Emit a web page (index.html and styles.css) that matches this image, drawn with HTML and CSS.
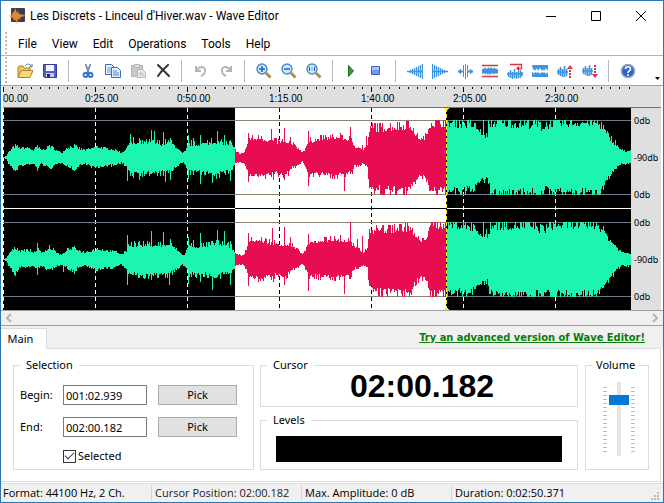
FILE: index.html
```html
<!DOCTYPE html>
<html lang="en">
<head>
<meta charset="utf-8">
<title>Les Discrets - Linceul d'Hiver.wav - Wave Editor</title>
<link rel="stylesheet" href="styles.css">
</head>
<body>
<div class="window">
  <header class="titlebar">
    <svg class="app-icon" viewBox="0 0 16 16"><rect x="2" y="0" width="14" height="14" rx="1" fill="#3d3f47"/><path d="M2 7h14" stroke="#6d6f78"/><path d="M0 8l3-1 1-4 1 2 1-5 2 5 1-2 1 3 4 1 2 1-4 1-2 3-1-2-1 6-2-5-1 2-1-3z" fill="#e8862e"/></svg>
    <h1 class="title">Les Discrets - Linceul d'Hiver.wav - Wave Editor</h1>
    <div class="window-controls">
      <button aria-label="Minimize"><svg viewBox="0 0 10 10"><path d="M0 5.500h10"/></svg></button>
      <button aria-label="Maximize"><svg viewBox="0 0 10 10"><path d="M.5.5h9v9h-9z"/></svg></button>
      <button aria-label="Close"><svg viewBox="0 0 10 10"><path d="M0 0l10 10M10 0L0 10"/></svg></button>
    </div>
  </header>

  <nav class="menubar grip">
    <button>File</button><button>View</button><button>Edit</button><button>Operations</button><button>Tools</button><button>Help</button>
  </nav>

  <div class="toolbar grip" role="toolbar" aria-label="Main tools">
    <button aria-label="Open"><svg viewBox="0 0 16 16"><path d="M1 14V4l1-1h4l1 2h6v3" fill="#f0c65a" stroke="#a9822c"/><path d="M1 14.500L4 7.500h12l-3 7z" fill="#fbd874" stroke="#a9822c"/><path d="M8 3c2-3 5-2 6 0m1-2v3h-3" fill="none" stroke="#4e7199"/></svg></button>
    <button aria-label="Save"><svg viewBox="0 0 16 16"><path d="M1.500 1.500h13v13h-12l-1-1z" fill="#5a5fc8" stroke="#34399a"/><path d="M4 2h8v6H4z" fill="#f4f6ff"/><path d="M4 10h8v4H4z" fill="#c3c8e4"/><path d="M5 11h3v3H5z" fill="#242a72"/></svg></button>
    <span class="sep"></span>
    <button aria-label="Cut"><svg viewBox="0 0 16 16" fill="none"><path d="M5.500 1l3.500 9M10.500 1L7 10" stroke="#6681a8" stroke-width="1.600"/><circle cx="5.500" cy="12" r="2" stroke="#2e6bd0" stroke-width="1.800"/><circle cx="10.500" cy="12" r="2" stroke="#2e6bd0" stroke-width="1.800"/></svg></button>
    <button aria-label="Copy"><svg viewBox="0 0 16 16" stroke="#3a6cb8"><path d="M.5 1.500h6l3 3v7h-9z" fill="#e4f0ff"/><path d="M2 5h5M2 7h4M2 9h4" stroke="#6b9ee0"/><path d="M6.500 4.500h6l3 3v7h-9z" fill="#e4f0ff"/><path d="M8 8h4M8 10h6M8 12h6" stroke="#4b86d6"/></svg></button>
    <button aria-label="Paste" disabled><svg viewBox="0 0 16 16" stroke="#b4b4b4"><path d="M1.500 2.500h11v11h-11z" fill="#c9c9c9"/><path d="M4.500 1.500h5v3h-5z" fill="#e2e2e2"/><path d="M7.500 6.500h5l3 3v5h-8z" fill="#ececec"/><path d="M9 10h4M9 12h5"/></svg></button>
    <button aria-label="Delete"><svg viewBox="0 0 16 16"><path d="M3 2q5 5 11 11M13 2Q7 7 3 13" fill="none" stroke="#333" stroke-width="2" stroke-linecap="round"/></svg></button>
    <span class="sep"></span>
    <button aria-label="Undo" disabled><svg viewBox="0 0 16 16"><path d="M3 3v5h5M3.500 7.500C7 2 13 4 12 8c0 2-2 4-4 5" fill="none" stroke="#b5b5b5" stroke-width="2"/></svg></button>
    <button aria-label="Redo" disabled><svg viewBox="0 0 16 16"><path d="M13 3v5H8M12.500 7.500C9 2 3 4 4 8c0 2 2 4 4 5" fill="none" stroke="#b5b5b5" stroke-width="2"/></svg></button>
    <span class="sep"></span>
    <button aria-label="Zoom in"><svg viewBox="0 0 16 16"><path d="M10 10l4.500 4.500" stroke="#b98a4c" stroke-width="3"/><circle cx="6" cy="6" r="5" fill="#cdeaff" stroke="#4a86c8" stroke-width="1.400"/><path d="M3 6h6M6 3v6" stroke="#1b5fb5" stroke-width="1.500"/></svg></button>
    <button aria-label="Zoom out"><svg viewBox="0 0 16 16"><path d="M10 10l4.500 4.500" stroke="#b98a4c" stroke-width="3"/><circle cx="6" cy="6" r="5" fill="#cdeaff" stroke="#4a86c8" stroke-width="1.400"/><path d="M3 6h6" stroke="#1b5fb5" stroke-width="1.500"/></svg></button>
    <button aria-label="Actual size"><svg viewBox="0 0 16 16"><path d="M10 10l4.500 4.500" stroke="#b98a4c" stroke-width="3"/><circle cx="6" cy="6" r="5" fill="#cdeaff" stroke="#4a86c8" stroke-width="1.400"/><path d="M3.500 4v4M8.500 4v4M6 4.500v1M6 6.500v1" stroke="#1b5fb5"/></svg></button>
    <span class="sep"></span>
    <button aria-label="Play"><svg viewBox="0 0 16 16"><path d="M4.500 2.500v11l5-5.500z" fill="#35a02c" stroke="#1d6b1b"/></svg></button>
    <button aria-label="Stop"><svg viewBox="0 0 16 16"><path d="M2.500 3.500h8v8h-8z" fill="#6f98e6" stroke="#4263b0"/><path d="M3 4h7v3H3z" fill="#a8c4f6"/></svg></button>
    <span class="sep"></span>
    <button aria-label="Fade in"><svg viewBox="0 0 16 16" stroke="#3d94e0" stroke-width="1.300"><path d="M0 8.500h16M3.500 7v3M5.500 6v5M7.500 5v7M9.500 4v9M11.500 3v11M13.500 2v13M15.500 1v15"/></svg></button>
    <button aria-label="Fade out"><svg viewBox="0 0 16 16" stroke="#3d94e0" stroke-width="1.300"><path d="M0 8.500h16M12.500 7v3M10.500 6v5M8.500 5v7M6.500 4v9M4.500 3v11M2.500 2v13M.5 1v15"/></svg></button>
    <button aria-label="Insert silence"><svg viewBox="0 0 16 16"><path d="M6.500 2v12M8.500 1v15M10.500 2v12" stroke="#3d94e0"/><path d="M1 8.500h5M11 8.500h5" stroke="#3d94e0" stroke-width="2"/><path d="M1 8.500l3-3v6zM16 8.500l-3-3v6z" fill="#3d94e0"/></svg></button>
    <button aria-label="Normalize"><svg viewBox="0 0 16 16"><path d="M0 2.500h16M0 13.500h16" stroke="#d23a40" stroke-width="1.300"/><path d="M0 7l1-2 1 1 1-2 1 2 2-1 1-1 1 2 1-2 2 2 1-2 1 2 1-1 2 2v3l-2 1-1-1-1 2-1-2-2 1-1 1-1-2-1 2-2-2-1 2-1-2-2 1-1-1z" fill="#3d94e0"/></svg></button>
    <button aria-label="Reverse"><svg viewBox="0 0 16 16"><path d="M3 1.500h11.500v4H10m2-2l-2 2 2 2" fill="none" stroke="#d23a40" stroke-width="1.300"/><path d="M0 11h16M1.500 9v5M3.500 7v8M5.500 9v7M7.500 6v9M9.500 9v7M11.500 8v7M13.500 7v8M15 9v4" stroke="#3d94e0" stroke-width="1.500"/></svg></button>
    <button aria-label="Invert"><svg viewBox="0 0 16 16"><path d="M0 2h16v4l-1 2-1-3-2 3-1-2-1 2-2-3-2 3-1-3-2 3-1-2-1 1zM0 14h16v-3l-1-2-1 2-2-2-1 1-2-1-1 2-2-2-1 1-2-1-1 2-1-2-1 1z" fill="#3d94e0"/></svg></button>
    <button aria-label="Raise volume"><svg viewBox="0 0 16 16"><path d="M0 9h11M1.500 6v6M3.500 4v9M5.500 6v8M7.500 3v11M9.500 6v7" stroke="#3d94e0" stroke-width="1.600"/><path d="M13 15V6" stroke="#d23a40" stroke-width="2" stroke-dasharray="2 1"/><path d="M13 2l3 4h-6z" fill="#d23a40"/></svg></button>
    <button aria-label="Lower volume"><svg viewBox="0 0 16 16"><path d="M0 8h11M1.500 5v6M3.500 3v9M5.500 5v8M7.500 2v11M9.500 5v7" stroke="#3d94e0" stroke-width="1.600"/><path d="M13 2v9" stroke="#d23a40" stroke-width="2" stroke-dasharray="2 1"/><path d="M13 15l3-4h-6z" fill="#d23a40"/></svg></button>
    <span class="sep"></span>
    <button aria-label="Help"><svg viewBox="0 0 16 16"><circle cx="8" cy="8" r="6.500" fill="#2f63cf" stroke="#8fa3c6" stroke-width="1.500"/><path d="M5.500 6c0-3 5-3 5 0 0 2-2.500 1.500-2.500 4" fill="none" stroke="#fff" stroke-width="1.600"/><circle cx="8" cy="12" r="1" fill="#fff"/></svg></button>
    <button class="overflow" aria-label="More tools"></button>
  </div>

  <main class="editor">
    <div class="ruler">
      <svg id="ticks" viewBox="0 0 628 6" preserveAspectRatio="none" aria-hidden="true"></svg>
      <div class="times"><span>00.00</span><span>0:25.00</span><span>0:50.00</span><span>1:15.00</span><span>1:40.00</span><span>2:05.00</span><span>2:30.00</span></div>
    </div>
    <div class="tracks">
      <svg id="wave" viewBox="0 0 628 202" preserveAspectRatio="none" role="img" aria-label="Stereo waveform"></svg>
      <div class="scale">
        <div class="channel"><span>0db</span><span>-90db</span><span>0db</span></div>
        <div class="channel"><span>0db</span><span>-90db</span><span>0db</span></div>
      </div>
    </div>
    <div class="scrollbar">
      <button aria-label="Scroll left"><svg viewBox="0 0 6 8"><path d="M5 0L1 4l4 4"/></svg></button>
      <button aria-label="Scroll right"><svg viewBox="0 0 6 8"><path d="M1 0l4 4-4 4"/></svg></button>
    </div>
  </main>

  <div class="tabs">
    <button class="tab">Main</button>
    <a class="promo" href="#">Try an advanced version of Wave Editor!</a>
  </div>

  <section class="panel">
    <fieldset class="selection">
      <legend>Selection</legend>
      <div class="fields">
        <label for="begin">Begin:</label><input type="text" id="begin" value="001:02.939"><button>Pick</button>
        <label for="end">End:</label><input type="text" id="end" value="002:00.182"><button>Pick</button>
        <label class="check"><input type="checkbox" checked>Selected</label>
      </div>
    </fieldset>
    <div class="middle">
      <fieldset class="cursor"><legend>Cursor</legend><output>02:00.182</output></fieldset>
      <fieldset class="levels"><legend>Levels</legend><div class="meter"></div></fieldset>
    </div>
    <fieldset class="volume">
      <legend>Volume</legend>
      <div class="slider"><span class="marks"></span><input type="range" aria-label="Volume" min="0" max="100" value="80"><span class="marks"></span></div>
    </fieldset>
  </section>

  <footer class="status">
    <span class="strong">Format: 44100 Hz, 2 Ch.</span><span>Cursor Position: 02:00.182</span><span class="strong">Max. Amplitude: 0 dB</span><span class="strong">Duration: 0:02:50.371</span>
    <svg class="resize" viewBox="0 0 8 8"><path d="M6 0h2v2H6zM3 3h2v2H3zM6 3h2v2H6zM0 6h2v2H0zM3 6h2v2H3zM6 6h2v2H6z"/></svg>
  </footer>
</div>
<script src="wave.js"></script>
</body>
</html>
```
FILE: styles.css
```css
* { box-sizing: border-box; }
body { margin: 0; background: #fff; color: #000; font: 11px/14px "Noto Sans", sans-serif; }
button, input { font: inherit; color: inherit; margin: 0; padding: 0; border: 0; background: none; }
svg { display: block; }
.window { min-height: 100vh; display: flex; flex-direction: column; border: 1px solid #2878b8; }

.titlebar { height: 30px; display: flex; align-items: center; padding-left: 8px; }
.app-icon { width: 16px; height: 16px; }
.title { flex: 1; margin: 0 0 0 5px; font: 12px/16px Roboto, sans-serif; }
.window-controls { display: flex; }
.window-controls button { width: 45px; height: 30px; display: grid; place-items: center; }
.window-controls svg { width: 10px; height: 10px; fill: none; stroke: #000; overflow: visible; }

.grip::before { content: ""; width: 2px; align-self: stretch; margin: 1px 0 1px 4px; background: repeating-linear-gradient(#bbb 0 2px, transparent 2px 4px); }
.menubar { height: 25px; display: flex; align-items: center; gap: 15px; border-bottom: 1px solid #b4b4b4; font: 12px/16px Roboto, sans-serif; }
.menubar button { padding-top: 2px; }
.menubar button:first-child { margin-left: -4px; }

.toolbar { height: 30px; display: flex; align-items: center; border-bottom: 1px solid #a0a0a0; }
.toolbar button { width: 25px; height: 25px; display: grid; place-items: center; }
.toolbar button:first-child { margin-left: 5px; }
.toolbar svg { width: 16px; height: 16px; }
.sep { width: 1px; height: 22px; margin: 0 6px; background: #b8b8b8; }
.toolbar .overflow { width: 5px; height: 3px; margin: 16px 3px 0 auto; background: #000; clip-path: polygon(0 0, 100% 0, 50% 100%); }

.editor { padding: 0 2px; }
.ruler { height: 22px; padding-right: 30px; background: #dfdfdf; border-bottom: 1px solid #707070; }
.ruler svg { width: 100%; height: 6px; }
.times { display: flex; font: 10px/14px "Liberation Sans", sans-serif; }
.times span { flex: 0 0 14.65%; text-indent: -10px; white-space: nowrap; }
.times span:first-child { text-indent: 0; }
.tracks { display: flex; height: 202px; }
#wave { flex: 1; min-width: 0; height: 202px; background: #000; }
.scale { width: 30px; background: #dfdfdf; padding-left: 3px; font-size: 9px; line-height: 12px; }
.channel { height: 102px; padding: 7px 0 9px; display: flex; flex-direction: column; justify-content: space-between; }
.scrollbar { height: 16px; margin: 0 -2px; padding: 0 5px; display: flex; justify-content: space-between; align-items: center; background: #f0f0f0; border: solid #a0a0a0; border-width: 1px 0; }
.scrollbar svg { width: 6px; height: 8px; fill: none; stroke: #b4b4b4; stroke-width: 2; }

.tabs { height: 22px; padding-top: 2px; display: flex; justify-content: space-between; align-items: flex-start; background: #f0f0f0; }
.tab { height: 21px; width: 46px; padding-right: 6px; background: #fff; border-right: 1px solid #dcdcdc; border-top: 1px solid #dcdcdc; position: relative; }
.promo { margin-right: 18px; color: #0a7c0a; font: bold 11px/20px "DejaVu Sans Condensed", "DejaVu Sans", sans-serif; }

.panel { flex: 1; display: flex; gap: 6px; padding: 9px 11px 11px 12px; margin-right: 2px; border: solid #dcdcdc; border-width: 1px 1px 1px 0; }
fieldset { margin: 0; padding: 0; border: 1px solid #dcdcdc; min-width: 0; }
legend { margin-left: 6px; padding: 0 6px; line-height: 14px; }
.selection { width: 241px; flex: none; }
.fields { display: grid; grid-template-columns: 43px 84px 79px; row-gap: 12px; align-items: center; padding: 13px 0 0 6px; }
.fields button { height: 20px; width: 79px; margin-left: 11px; background: #e1e1e1; border: 1px solid #adadad; }
.fields input[type=text] { width: 84px; height: 20px; padding: 0 2px; border: 1px solid #7a7a7a; background: #fff; }
.check { grid-column: 2 / 4; display: flex; align-items: center; gap: 2px; }
.fields .check input { appearance: none; width: 13px; height: 13px; border: 1px solid #333; display: grid; place-items: center; }
.check input:checked::before { content: ""; width: 8px; height: 4px; margin-top: -3px; border: solid #333; border-width: 0 0 1px 1px; transform: rotate(-45deg); }
.middle { flex: 1; min-width: 0; display: flex; flex-direction: column; gap: 6px; }
.cursor { height: 49px; text-align: center; }
.cursor legend, .levels legend { text-align: left; }
.cursor output { display: block; padding-left: 6px; font: bold 32px/28px "Liberation Sans", sans-serif; }
.levels { flex: 1; }
.meter { height: 26px; margin: 9px 15px 0; background: #000; }
.volume { width: 64px; flex: none; margin-left: 1px; }
.volume legend { padding: 0 4px; }
.slider { display: flex; justify-content: center; align-items: center; gap: 2px; padding: 10px 0 0 3px; }
.slider input { appearance: none; writing-mode: vertical-lr; direction: rtl; width: 20px; height: 74px; background: linear-gradient(#e4e4e4, #e4e4e4) center / 4px 100% no-repeat; }
.slider input::-webkit-slider-thumb { appearance: none; width: 20px; height: 10px; background: #0078d7; }
.marks { width: 4px; height: 65px; background: repeating-linear-gradient(#bcbcbc 0 1px, transparent 1px 4px); }

.status { height: 19px; margin-top: 1px; display: flex; align-items: center; background: #f0f0f0; border-top: 1px solid #dcdcdc; font: 11px/16px "Open Sans", sans-serif; }
.status span { width: 150px; padding-left: 3px; border-left: 1px solid #d4d4d4; white-space: nowrap; color: #222; }
.status span:first-child { border-left: 0; padding-left: 2px; }
.status .strong { color: #000; font-weight: 500; }
.resize { width: 8px; height: 8px; margin: 6px 4px 0 auto; fill: #bcbcbc; }
```
FILE: wave.js
```javascript
// Envelope keyframes: x, amplitude above the centre line, amplitude below it.
const envelope = [
  [0,0,0],[3,1,1],[5,4,5],[9,8,9],[12,10,11],[16,8,7],[25,8,6],[30,6,5],[34,9,9],[38,6,5],[45,9,9],[49,9,8],[54,5,5],[59,4,4],
  [63,8,7],[71,10,10],[77,7,6],[82,6,5],[89,8,8],[94,9,9],[101,8,7],[107,7,7],[113,6,6],[118,4,4],[123,7,8],[125,13,13],[132,12,13],
  [147,13,14],[157,12,13],[165,13,13],[170,11,10],[175,7,7],[179,3,4],[182,5,6],[185,12,12],[192,11,13],[202,12,12],[212,14,17],
  [219,13,13],[227,11,11],[231,8,7],[233,4,4],[240,3,4],[243,9,9],[246,17,16],[257,17,17],[272,14,14],[282,13,15],[289,11,9],
  [295,8,6],[299,4,3],[302,8,8],[305,14,14],[317,17,15],[332,18,16],[347,16,14],[351,10,8],[356,9,7],[359,5,5],[364,11,7],
  [366,25,25],[369,29,31],[387,29,32],[402,31,32],[407,31,32],[411,22,22],[416,17,17],[420,16,16],[424,22,20],[426,33,32],
  [443,34,33],[467,32,32],[473,28,26],[478,22,21],[484,19,19],[487,33,34],[532,32,34],[540,28,31],[547,33,33],[594,34,34],
  [600,28,27],[605,19,18],[612,12,10],[618,6,5],[628,5,5]
];
const peaksUp = [
  {34:12,46:12,127:23,130:20,136:19,141:16,148:27,151:26,160:25,167:19,185:22,190:19,197:22,208:19,214:26,221:22,227:17,245:24,258:21,268:28,281:29,287:20,305:26,327:22,337:24,347:30,359:12,363:21,480:37,485:37},
  {34:16,46:14,124:24,131:18,136:18,148:28,160:27,167:20,185:22,190:19,197:26,208:18,214:29,221:28,227:18,245:26,258:21,269:31,281:32,287:22,305:25,327:23,337:24,347:37,354:20,359:23,480:37,483:30}
];
const peaksDown = [
  {12:13,34:13,71:13,124:23,130:20,136:22,148:16,162:24,167:22,185:21,197:26,209:25,227:23,245:24,257:18,270:22,281:22,305:28,327:20,341:33},
  {12:16,34:15,60:12,71:14,124:25,136:18,148:20,166:25,185:24,197:22,209:30,227:25,245:26,257:21,270:22,281:25,305:31,327:20,341:34}
];

let seed = 7;
const random = () => (seed = (seed * 16807) % 2147483647) / 2147483647;

function level(x, side) {
  let i = 1;
  while (envelope[i][0] < x) i++;
  const a = envelope[i - 1], b = envelope[i];
  const base = a[side] + (b[side] - a[side]) * (x - a[0]) / (b[0] - a[0]);
  const r = random();
  let jitter = (r - 0.2) * Math.min(4, base * 0.4);
  if (base > 10 && r > 0.8) jitter += 2;
  if (base > 28) jitter = r > 0.65 ? 5 : r * 9 - 4;
  return Math.min(37, Math.max(0, Math.round(base + jitter)));
}

function channelPath(channel, from, to, centre) {
  let d = "";
  for (let x = from; x < to; x++) {
    const up = Math.max(peaksUp[channel][x] || 0, level(x || 1, 1));
    const down = Math.max(peaksDown[channel][x] || 0, level(x || 1, 2));
    d += `M${x} ${centre - up}h1v${up + down + 1}h-1z`;
  }
  return d;
}

const GREEN = "#1bf5b0", RED = "#e80c50", SEL = [232, 443];
const hline = (y, color, x1, x2) => `<path d="M${x1} ${y + 0.5}H${x2}" stroke="${color}"/>`;
let art = `<rect x="${SEL[0]}" width="${SEL[1] - SEL[0]}" height="202" fill="#fff"/>`;
for (let x = 0; x < 628; x += 92) {
  const selected = x > SEL[0] && x < SEL[1];
  art += `<path d="M${x + 0.5} 0V202" stroke="${selected ? "#000" : "#fff"}" stroke-dasharray="4 3"/>`;
}
for (const y of [12, 86, 114, 188]) {
  art += hline(y, "#6f7d8c", 0, 628) + hline(y, "#908273", ...SEL);
}
art += hline(100, "#fff", 0, 628) + hline(100, "#000", ...SEL);
[49, 151].forEach((centre, channel) => {
  art += `<path fill="${GREEN}" d="${channelPath(channel, 0, SEL[0], centre)}"/>`;
  art += `<path fill="${RED}" d="${channelPath(channel, ...SEL, centre)}"/>`;
  art += `<path fill="${GREEN}" d="${channelPath(channel, SEL[1], 628, centre)}"/>`;
});
art += `<path d="M443.5 0V202" stroke="#000"/><path d="M443.5 0V202" stroke="#ffee20" stroke-dasharray="4 2"/>`;
art += `<path d="M441 0h5l-2.500 3zM441 202h5l-2.500-3z" fill="#ffee20"/>`;
const wave = document.getElementById("wave");
wave.setAttribute("shape-rendering", "crispEdges");
wave.innerHTML = art;

let ticks = "";
for (let i = 0; i < 69; i++) {
  ticks += `M${Math.round(i * 9.2) + 0.5} 1V${i % 10 ? 3 : 6}`;
}
document.getElementById("ticks").innerHTML = `<path d="${ticks}" stroke="#000" shape-rendering="crispEdges"/>`;
```
